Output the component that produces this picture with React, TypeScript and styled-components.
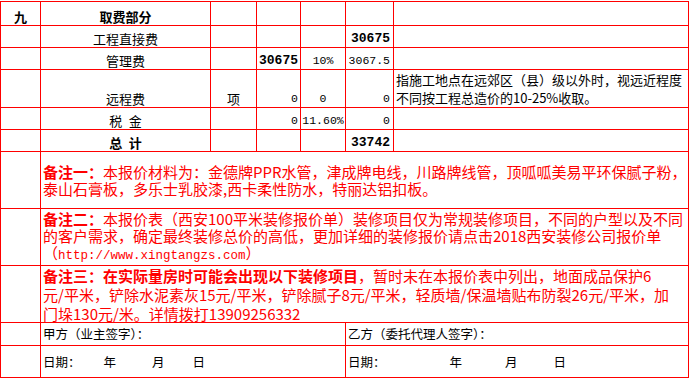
import React from "react";
import styled, { createGlobalStyle, css } from "styled-components";

const Global = createGlobalStyle`
  html, body { margin: 0; padding: 0; background: #fff; }
  body {
    font-family: "Noto Sans CJK SC", "Noto Sans", sans-serif;
    color: #000;
  }
`;

const RED = "#ff0000";

const Page = styled.div`
  padding-top: 1px;
`;

const Sheet = styled.div`
  display: grid;
  grid-template-columns: 39px 169px 45px 43px 44px 47px 294px;
  grid-template-rows: 23px 21px 21px 37px 21px 21px 56px 56px 56px 22px 31px;
  gap: 1px;
  padding: 1px;
  background: ${RED};
  width: max-content;
`;

const Cell = styled.div<{ $span?: number }>`
  background: #fff;
  min-width: 0;
  overflow: hidden;
  display: flex;
  align-items: flex-end;
  font-size: 13px;
  line-height: 14px;
  padding-bottom: 1px;
  box-sizing: border-box;
  white-space: nowrap;
  ${(p) =>
    p.$span &&
    css`
      grid-column: span ${p.$span};
    `}
`;

const Heading = styled(Cell)`
  justify-content: center;
  font-weight: 700;
`;

const ItemName = styled(Cell)<{ $bold?: boolean }>`
  justify-content: center;
  font-weight: ${(p) => (p.$bold ? 700 : 400)};
`;

const Unit = styled(Cell)`
  justify-content: center;
`;

const Amount = styled(Cell)<{ $bold?: boolean; $pad?: number }>`
  justify-content: flex-end;
  padding-right: ${(p) => p.$pad ?? 2}px;
  font-family: "Liberation Mono", monospace;
  font-size: ${(p) => (p.$bold ? 13 : 11.5)}px;
  font-weight: ${(p) => (p.$bold ? 700 : 400)};
`;

const Rate = styled(Cell)`
  justify-content: center;
  font-family: "Liberation Mono", monospace;
  font-size: 11.5px;
`;

const Remark = styled(Cell)`
  line-height: 18px;
  padding-left: 2px;
  padding-bottom: 0;
`;

const NoteCell = styled(Cell)<{ $lh?: number }>`
  grid-column: span 6;
  align-items: center;
  padding: 0 0 0 2px;
  color: ${RED};
  font-size: 15px;
  line-height: ${(p) => p.$lh ?? 17}px;
`;

const Strong = styled.b`
  font-weight: 700;
`;

const Url = styled.span`
  font-family: "Liberation Mono", monospace;
  font-size: 12.5px;
`;

const SignCell = styled(Cell)`
  align-items: center;
  padding: 0 0 0 2px;
  font-size: 12.5px;
`;

const DateMark = styled.span<{ $gap: number }>`
  margin-left: ${(p) => p.$gap}px;
`;

const Empty = styled(Cell)``;

export default function App() {
  return (
    <Page>
      <Global />
      <Sheet>
        {/* row 1 */}
        <Heading>九</Heading>
        <Heading>取费部分</Heading>
        <Empty />
        <Empty />
        <Empty />
        <Empty />
        <Empty />
        {/* row 2 */}
        <Empty />
        <ItemName>工程直接费</ItemName>
        <Empty />
        <Empty />
        <Empty />
        <Amount $bold $pad={3}>30675</Amount>
        <Empty />
        {/* row 3 */}
        <Empty />
        <ItemName>管理费</ItemName>
        <Empty />
        <Amount $bold>30675</Amount>
        <Rate>10%</Rate>
        <Amount $pad={3}>3067.5</Amount>
        <Empty />
        {/* row 4 */}
        <Empty />
        <ItemName>远程费</ItemName>
        <Unit>项</Unit>
        <Amount>0</Amount>
        <Rate>0</Rate>
        <Amount $pad={3}>0</Amount>
        <Remark>
          指施工地点在远郊区（县）级以外时，视远近程度
          <br />
          不同按工程总造价的10-25%收取。
        </Remark>
        {/* row 5 */}
        <Empty />
        <ItemName>税{"\u2002"}金</ItemName>
        <Empty />
        <Amount>0</Amount>
        <Rate>11.60%</Rate>
        <Amount $pad={3}>0</Amount>
        <Empty />
        {/* row 6 */}
        <Empty />
        <ItemName $bold>总{"\u2002"}计</ItemName>
        <Empty />
        <Empty />
        <Empty />
        <Amount $bold $pad={3}>33742</Amount>
        <Empty />
        {/* notes */}
        <Empty />
        <NoteCell>
          <div>
            <Strong>备注一：</Strong>本报价材料为：金德牌PPR水管，津成牌电线，川路牌线管，顶呱呱美易平环保腻子粉，
            <br />
            泰山石膏板，多乐士乳胶漆,西卡柔性防水，特丽达铝扣板。
          </div>
        </NoteCell>
        <Empty />
        <NoteCell>
          <div>
            <Strong>备注二：</Strong>本报价表（西安100平米装修报价单）装修项目仅为常规装修项目，不同的户型以及不同
            <br />
            的客户需求，确定最终装修总价的高低，更加详细的装修报价请点击2018西安装修公司报价单
            <br />（<Url>http://www.xingtangzs.com</Url>）
          </div>
        </NoteCell>
        <Empty />
        <NoteCell $lh={19}>
          <div>
            <Strong>备注三：在实际量房时可能会出现以下装修项目</Strong>，暂时未在本报价表中列出，地面成品保护6
            <br />
            元/平米，铲除水泥素灰15元/平米，铲除腻子8元/平米，轻质墙/保温墙贴布防裂26元/平米，加
            <br />
            门垛130元/米。详情拨打13909256332
          </div>
        </NoteCell>
        {/* signatures */}
        <Empty />
        <SignCell $span={4}>甲方（业主签字）：</SignCell>
        <SignCell $span={2}>乙方（委托代理人签字）：</SignCell>
        <Empty />
        <SignCell $span={4}>
          日期：<DateMark $gap={23}>年</DateMark>
          <DateMark $gap={36}>月</DateMark>
          <DateMark $gap={28}>日</DateMark>
        </SignCell>
        <SignCell $span={2}>
          日期：<DateMark $gap={64}>年</DateMark>
          <DateMark $gap={43}>月</DateMark>
          <DateMark $gap={36}>日</DateMark>
        </SignCell>
      </Sheet>
    </Page>
  );
}
